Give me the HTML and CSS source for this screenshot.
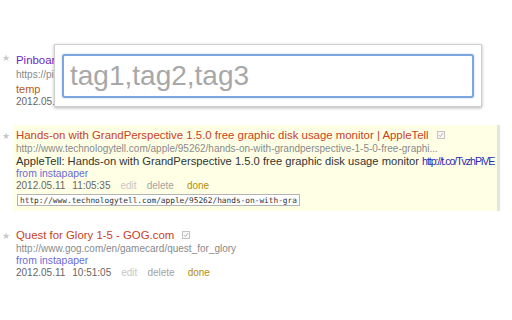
FILE: index.html
```html
<!DOCTYPE html>
<html lang="en">

<head>
    <meta charset="UTF-8">
    <title>Bookmarks</title>
    <link rel="stylesheet" href="styles.css">
</head>

<body>
    <ul class="bookmarks">
        <li class="bookmark">
            <span class="star">&#9733;</span>
            <div class="bm-body">
                <a class="bm-title visited" href="#">Pinboard</a>
                <div class="bm-url">https://pinboard.in/</div>
                <div class="bm-tags"><a href="#">temp</a></div>
                <div class="bm-meta">2012.05.11<span class="time">11:20:14</span></div>
            </div>
        </li>

        <li class="bookmark">
            <span class="star">&#9733;</span>
            <div class="bm-body selected">
                <div class="bm-head">
                    <a class="bm-title" href="#">Hands-on with GrandPerspective 1.5.0 free graphic disk usage monitor | AppleTell</a>
                    <svg class="check" width="8" height="8" viewBox="0 0 8 8">
                        <rect x="0.5" y="0.5" width="7" height="7" fill="#f7f7f7" stroke="#c2c2c2"/>
                        <path d="M2 4.2 L3.3 5.6 L6 2.2" fill="none" stroke="#a8a8a8" stroke-width="0.9"/>
                    </svg>
                </div>
                <div class="bm-url">http://www.technologytell.com/apple/95262/hands-on-with-grandperspective-1-5-0-free-graphi...</div>
                <div class="bm-desc">AppleTell: Hands-on with GrandPerspective 1.5.0 free graphic disk usage monitor <a href="#">http://t.co/TvzhPiVE</a></div>
                <div class="bm-from">from instapaper</div>
                <div class="bm-meta">2012.05.11<span class="time">11:05:35</span><span class="edit">edit</span><span class="delete">delete</span><span class="done">done</span></div>
                <input class="bm-link" type="text" value="http://www.technologytell.com/apple/95262/hands-on-with-grandperspective-1-5-0-free-graphic-disk-usage-monitor/">
            </div>
        </li>

        <li class="bookmark">
            <span class="star">&#9733;</span>
            <div class="bm-body">
                <div class="bm-head">
                    <a class="bm-title" href="#">Quest for Glory 1-5 - GOG.com</a>
                    <svg class="check" width="8" height="8" viewBox="0 0 8 8">
                        <rect x="0.5" y="0.5" width="7" height="7" fill="#f7f7f7" stroke="#c2c2c2"/>
                        <path d="M2 4.2 L3.3 5.6 L6 2.2" fill="none" stroke="#a8a8a8" stroke-width="0.9"/>
                    </svg>
                </div>
                <div class="bm-url">http://www.gog.com/en/gamecard/quest_for_glory</div>
                <div class="bm-from">from instapaper</div>
                <div class="bm-meta">2012.05.11<span class="time">10:51:05</span><span class="edit">edit</span><span class="delete">delete</span><span class="done">done</span></div>
            </div>
        </li>
    </ul>

    <div class="tag-popup">
        <input class="tag-input" type="text" placeholder="tag1,tag2,tag3">
    </div>
</body>

</html>
```

FILE: styles.css
```css
html,
body {
    margin: 0;
    background: #fff;
    font-family: 'Liberation Sans', Arial, sans-serif;
    color: #333;
}

a {
    text-decoration: none;
}

.bookmarks {
    list-style: none;
    margin: 0;
    padding: 47px 0 0 0;
}

.bookmark {
    display: flex;
    margin-bottom: 14px;
}

.star {
    width: 14px;
    padding: 4px 0 0 2px;
    box-sizing: border-box;
    font-family: 'DejaVu Sans', sans-serif;
    font-size: 9px;
    line-height: 14px;
    color: #c8c8c8;
}

.bm-body {
    width: 483px;
    padding: 3px 0 3px 2px;
    box-sizing: border-box;
}

.bm-body.selected {
    width: 486px;
    background: #ffffe6;
    border-right: 3px solid #e4e4e4;
    padding-bottom: 5px;
}

.bm-head {
    display: flex;
    align-items: center;
}

.bm-title {
    font-size: 11.4px;
    line-height: 14px;
    color: #c8421e;
}

.bm-title.visited {
    color: #6a26c8;
}

.check {
    margin-left: 8px;
}

.bm-url {
    font-size: 10px;
    line-height: 13px;
    color: #8a8a8a;
}

.bm-tags {
    padding: 1px 0 0 0;
    font-size: 11px;
    line-height: 14px;
}

.bm-tags a {
    color: #b65a1e;
}

.bm-desc {
    font-size: 11.2px;
    line-height: 13px;
    white-space: nowrap;
}

.bm-desc a {
    font-size: 10.5px;
    letter-spacing: -1px;
    color: #2a2ab8;
}

.bm-from {
    font-size: 10.4px;
    line-height: 12px;
    color: #6b6bd6;
}

.bm-meta {
    font-size: 10px;
    line-height: 12px;
    color: #666;
}

.bm-meta .time {
    margin-left: 7px;
}

.bm-meta .edit {
    margin-left: 10px;
    color: #c6c6c6;
}

.bm-meta .delete {
    margin-left: 10px;
    color: #a2a2a2;
}

.bm-meta .done {
    margin-left: 13px;
    color: #b88d0a;
}

.bm-link {
    display: block;
    width: 283px;
    height: 12px;
    margin: 2px 0 0 1px;
    padding: 0 2px;
    box-sizing: border-box;
    border: 1px solid #b4b4b4;
    font-family: 'DejaVu Sans Mono', monospace;
    font-size: 7.8px;
    color: #333;
    background: #fff;
}

.tag-popup {
    position: absolute;
    left: 54px;
    top: 44px;
    width: 428px;
    height: 63px;
    box-sizing: border-box;
    padding: 9px 7px 10px 7px;
    background: #fff;
    border: 1px solid #cfcfcf;
    box-shadow: 0 1px 3px rgba(0, 0, 0, 0.3);
}

.tag-input {
    width: 100%;
    height: 44px;
    box-sizing: border-box;
    padding: 0 6px;
    border: 2px solid #7da6df;
    border-radius: 3px;
    box-shadow: 0 0 2px #a9c6ee;
    outline: none;
    font-family: 'Liberation Sans', Arial, sans-serif;
    font-size: 28px;
    color: #333;
}

.tag-input::placeholder {
    color: #a8a8a8;
}
```
